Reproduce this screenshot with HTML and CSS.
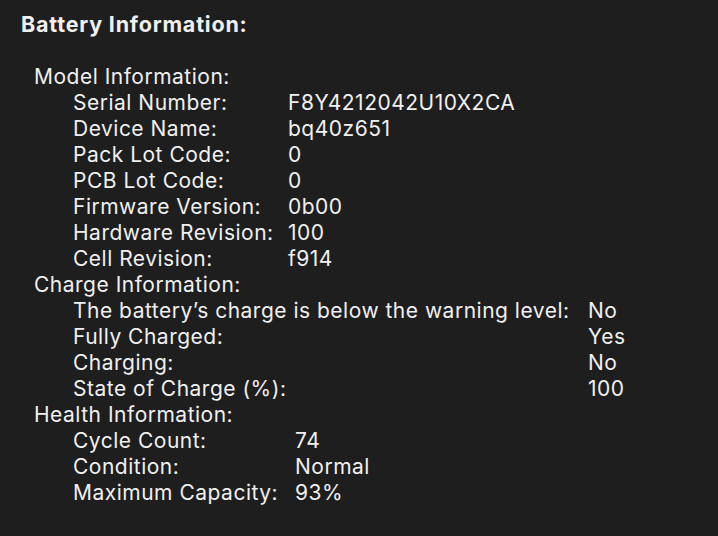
FILE: index.html
```html
<!DOCTYPE html>
<html lang="en">
<head>
    <meta charset="UTF-8">
    <title>Battery Information</title>
    <link rel="stylesheet" href="styles.css">
</head>
<body>
    <div class="report">
        <h1 class="title">Battery Information:</h1>

        <div class="section">
            <h2 class="section-title">Model Information:</h2>
            <dl class="rows rows-model">
                <dt>Serial Number:</dt><dd>F8Y4212042U10X2CA</dd>
                <dt>Device Name:</dt><dd>bq40z651</dd>
                <dt>Pack Lot Code:</dt><dd>0</dd>
                <dt>PCB Lot Code:</dt><dd>0</dd>
                <dt>Firmware Version:</dt><dd>0b00</dd>
                <dt>Hardware Revision:</dt><dd>100</dd>
                <dt>Cell Revision:</dt><dd>f914</dd>
            </dl>
        </div>

        <div class="section">
            <h2 class="section-title">Charge Information:</h2>
            <dl class="rows rows-charge">
                <dt>The battery’s charge is below the warning level:</dt><dd>No</dd>
                <dt>Fully Charged:</dt><dd>Yes</dd>
                <dt>Charging:</dt><dd>No</dd>
                <dt>State of Charge (%):</dt><dd>100</dd>
            </dl>
        </div>

        <div class="section">
            <h2 class="section-title">Health Information:</h2>
            <dl class="rows rows-health">
                <dt>Cycle Count:</dt><dd>74</dd>
                <dt>Condition:</dt><dd>Normal</dd>
                <dt>Maximum Capacity:</dt><dd>93%</dd>
            </dl>
        </div>
    </div>
</body>
</html>
```

FILE: styles.css
```css
:root {
    --bg-color: #1e1e1e;
    --text-color: #f0f0f0;
}

* {
    margin: 0;
    padding: 0;
    box-sizing: border-box;
    font-family: Inter, "Noto Sans", sans-serif;
}

body {
    background-color: var(--bg-color);
    color: var(--text-color);
    min-height: 100vh;
}

.report {
    padding: 11px 0 0 21px;
    font-size: 21px;
    line-height: 26px;
    letter-spacing: 0.5px;
}

.title {
    font-size: 21.5px;
    font-weight: 700;
    line-height: 26px;
    letter-spacing: 0.8px;
    margin-bottom: 27px;
}

.section {
    padding-left: 13px;
}

.section-title {
    font-size: inherit;
    font-weight: 400;
}

.rows {
    display: grid;
    padding-left: 39px;
}

.rows-model {
    grid-template-columns: 215px auto;
}

.rows-charge {
    grid-template-columns: 515px auto;
}

.rows-health {
    grid-template-columns: 222px auto;
}

dt, dd {
    white-space: nowrap;
}
```
